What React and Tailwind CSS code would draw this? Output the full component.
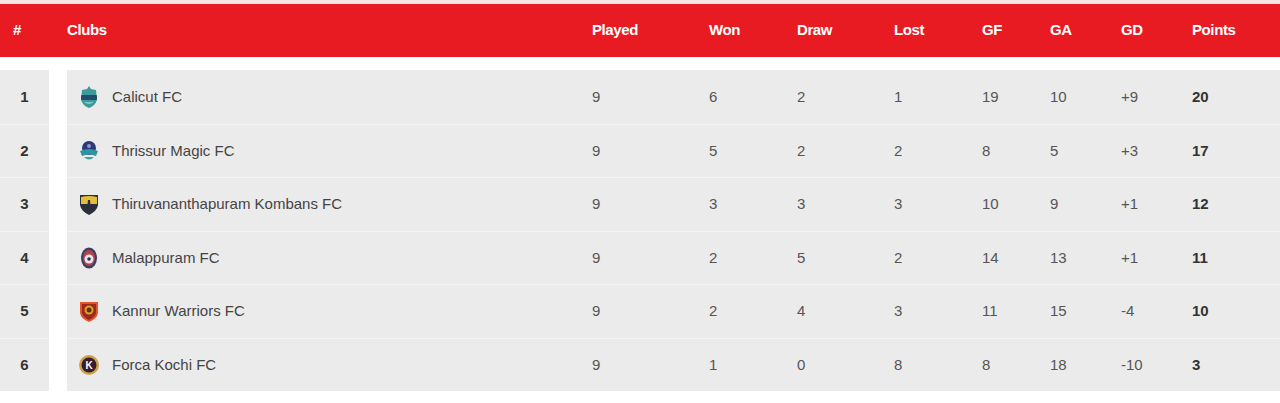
const rows = [
  { pos: 1, club: 'Calicut FC', logo: 'calicut', p: 9, w: 6, d: 2, l: 1, gf: 19, ga: 10, gd: '+9', pts: 20 },
  { pos: 2, club: 'Thrissur Magic FC', logo: 'thrissur', p: 9, w: 5, d: 2, l: 2, gf: 8, ga: 5, gd: '+3', pts: 17 },
  { pos: 3, club: 'Thiruvananthapuram Kombans FC', logo: 'kombans', p: 9, w: 3, d: 3, l: 3, gf: 10, ga: 9, gd: '+1', pts: 12 },
  { pos: 4, club: 'Malappuram FC', logo: 'malappuram', p: 9, w: 2, d: 5, l: 2, gf: 14, ga: 13, gd: '+1', pts: 11 },
  { pos: 5, club: 'Kannur Warriors FC', logo: 'kannur', p: 9, w: 2, d: 4, l: 3, gf: 11, ga: 15, gd: '-4', pts: 10 },
  { pos: 6, club: 'Forca Kochi FC', logo: 'kochi', p: 9, w: 1, d: 0, l: 8, gf: 8, ga: 18, gd: '-10', pts: 3 },
]

// column widths after the club column, in px
const cols = ['w-[117px]', 'w-[88px]', 'w-[97px]', 'w-[88px]', 'w-[68px]', 'w-[71px]', 'w-[71px]', 'flex-1']

function Logo({ kind }) {
  if (kind === 'calicut') {
    return (
      <svg width="22" height="24" viewBox="0 0 22 24">
        <path d="M11 1 L13 4 L18 5 L19 15 Q17 21 11 23 Q5 21 3 15 L4 5 L9 4 Z" fill="#3f9a9c" />
        <rect x="3" y="10" width="16" height="5" rx="1" fill="#1f4f6b" />
        <path d="M6 17 Q11 21 16 17" fill="#7cc9c6" />
      </svg>
    )
  }
  if (kind === 'thrissur') {
    return (
      <svg width="22" height="24" viewBox="0 0 22 24">
        <circle cx="11" cy="9" r="7" fill="#2c3a78" />
        <path d="M2 12 Q11 8 20 12 L18 17 Q11 14 4 17 Z" fill="#2f93a6" />
        <path d="M6 18 Q11 23 16 18" fill="#3aa6a8" />
        <circle cx="11" cy="7" r="2" fill="#8d9ad4" />
      </svg>
    )
  }
  if (kind === 'kombans') {
    return (
      <svg width="22" height="24" viewBox="0 0 22 24">
        <path d="M2 3 L20 3 L20 13 Q19 19 11 23 Q3 19 2 13 Z" fill="#2c2e3a" />
        <path d="M3 5 Q11 3 19 5 L19 12 L3 12 Z" fill="#e5bd3c" />
        <path d="M10 8 L12 8 L13 18 L9 18 Z" fill="#2c2e3a" />
      </svg>
    )
  }
  if (kind === 'malappuram') {
    return (
      <svg width="22" height="24" viewBox="0 0 22 24">
        <ellipse cx="11" cy="12" rx="8" ry="10.5" fill="#3b3f64" />
        <ellipse cx="11" cy="12" rx="6" ry="8" fill="#b3424a" />
        <circle cx="11" cy="13" r="4.5" fill="#e8e8ee" />
        <circle cx="11" cy="13" r="1.8" fill="#2a2d4a" />
      </svg>
    )
  }
  if (kind === 'kannur') {
    return (
      <svg width="22" height="24" viewBox="0 0 22 24">
        <path d="M2 3 L20 3 L20 14 Q19 20 11 23 Q3 20 2 14 Z" fill="#e2552b" />
        <path d="M4 5 L18 5 L18 14 Q17 18 11 21 Q5 18 4 14 Z" fill="#9a2a1c" />
        <circle cx="11" cy="11" r="4.5" fill="#d9a32a" />
        <circle cx="11" cy="11" r="2.5" fill="#6b2a12" />
      </svg>
    )
  }
  return (
    <svg width="22" height="24" viewBox="0 0 22 24">
      <circle cx="11" cy="12" r="10" fill="#c9a24a" />
      <circle cx="11" cy="12" r="7.5" fill="#3a1a2c" />
      <text x="11" y="16" textAnchor="middle" fontSize="10" fontWeight="bold" fill="#fff" fontFamily="Liberation Sans, Arial, sans-serif">K</text>
    </svg>
  )
}

export default function App() {
  const headers = ['Played', 'Won', 'Draw', 'Lost', 'GF', 'GA', 'GD', 'Points']
  return (
    <div className="w-[1280px] h-[403px] bg-white overflow-hidden font-[family-name:Liberation_Sans,Arial,sans-serif]">
      <div className="h-[4px] bg-[#f7e4e4]" />
      <div className="h-[53px] bg-[#e81b23] flex items-center text-white font-bold text-[15px] tracking-[-0.4px]">
        <div className="w-[67px] pl-[13px]">#</div>
        <div className="w-[525px]">Clubs</div>
        {headers.map((h, i) => (
          <div key={h} className={cols[i]}>{h}</div>
        ))}
      </div>
      <div className="mt-[13px]">
        {rows.map((r, i) => (
          <div key={r.pos} className="flex h-[53.5px]">
            <div className={`w-[49px] bg-[#ecebeb] flex items-center justify-center font-bold text-[15px] text-[#333] ${i > 0 ? 'border-t border-[#f6f5f5]' : ''}`}>
              {r.pos}
            </div>
            <div className={`ml-[18px] flex-1 bg-[#ecebeb] flex items-center text-[15px] text-[#555] ${i > 0 ? 'border-t border-[#f6f5f5]' : ''}`}>
              <div className="w-[525px] flex items-center">
                <div className="ml-[11px] w-[22px] h-[24px] flex items-center justify-center">
                  <Logo kind={r.logo} />
                </div>
                <span className="ml-[12px] text-[#444]">{r.club}</span>
              </div>
              <div className={cols[0]}>{r.p}</div>
              <div className={cols[1]}>{r.w}</div>
              <div className={cols[2]}>{r.d}</div>
              <div className={cols[3]}>{r.l}</div>
              <div className={cols[4]}>{r.gf}</div>
              <div className={cols[5]}>{r.ga}</div>
              <div className={cols[6]}>{r.gd}</div>
              <div className={`${cols[7]} font-bold text-[#333]`}>{r.pts}</div>
            </div>
          </div>
        ))}
      </div>
    </div>
  )
}
